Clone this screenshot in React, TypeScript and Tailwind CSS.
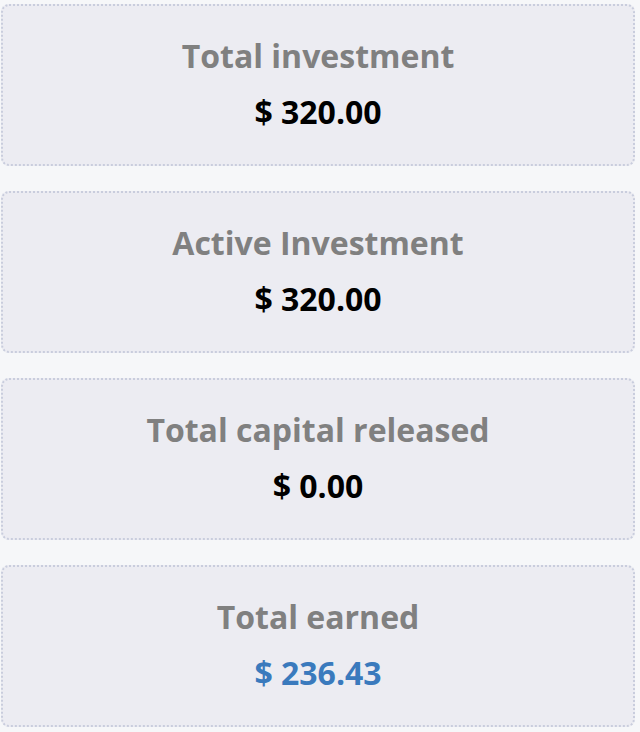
import React from "react";

const stats = [
  { label: "Total investment", value: "$ 320.00", accent: false },
  { label: "Active Investment", value: "$ 320.00", accent: false },
  { label: "Total capital released", value: "$ 0.00", accent: false },
  { label: "Total earned", value: "$ 236.43", accent: true },
];

export default function App() {
  return (
    <div
      className="min-h-screen bg-[#f6f7f9] pt-[4px] pl-[1px] pr-[5px] flex flex-col gap-[25px]"
      style={{ fontFamily: '"Open Sans", sans-serif' }}
    >
      {stats.map((s, i) => (
        <div
          key={i}
          className="h-[162px] rounded-[8px] border-2 border-dotted border-[#c9cddd] bg-[#ececf2] flex flex-col items-center pt-[28px]"
        >
          <h3 className="text-[32px] leading-[44px] font-bold text-[#808080]">{s.label}</h3>
          <p
            className={
              "text-[32px] leading-[44px] font-bold mt-[12px] " +
              (s.accent ? "text-[#3a7abd]" : "text-black")
            }
          >
            {s.value}
          </p>
        </div>
      ))}
    </div>
  );
}
